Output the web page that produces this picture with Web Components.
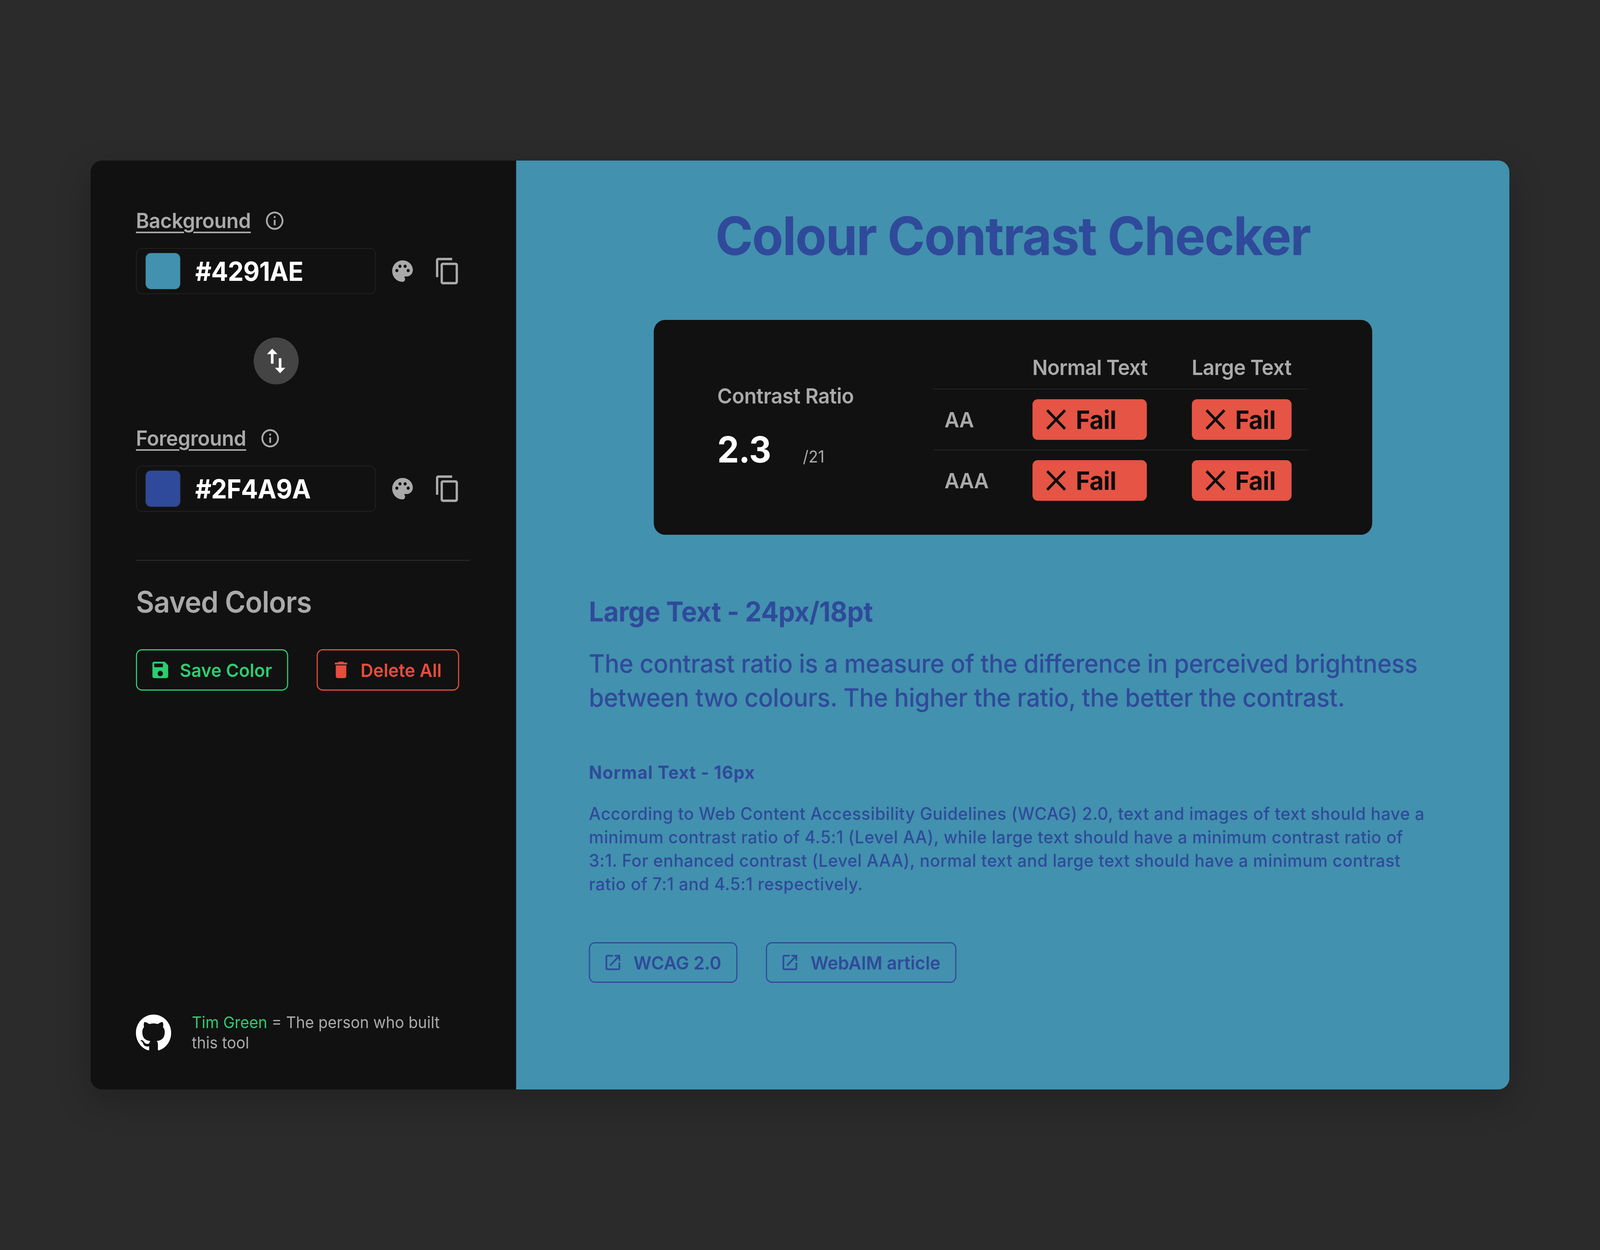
<!DOCTYPE html>
<html lang="en">
<head>
<meta charset="utf-8">
<title>Colour Contrast Checker</title>
<style>
  html, body { margin: 0; height: 100%; }
  body {
    background: #2b2b2b;
    display: flex;
    align-items: center;
    justify-content: center;
    overflow: hidden;
    font-family: Inter, "Liberation Sans", sans-serif;
  }
</style>
</head>
<body>
<contrast-app>
  <contrast-sidebar slot="side">
    <colour-field label="Background" value="#4291AE"></colour-field>
    <swap-button></swap-button>
    <colour-field label="Foreground" value="#2F4A9A"></colour-field>
  </contrast-sidebar>
  <contrast-main slot="main">
    <contrast-results></contrast-results>
  </contrast-main>
</contrast-app>

<script>
const ICONS = {
  info: 'M11 7h2v2h-2zm0 4h2v6h-2zm1-9C6.48 2 2 6.48 2 12s4.48 10 10 10 10-4.48 10-10S17.52 2 12 2zm0 18c-4.41 0-8-3.59-8-8s3.59-8 8-8 8 3.59 8 8-3.59 8-8 8z',
  palette: 'M12 2C6.49 2 2 6.49 2 12s4.49 10 10 10c1.38 0 2.5-1.12 2.5-2.5 0-.61-.23-1.2-.64-1.67-.08-.1-.13-.21-.13-.33 0-.28.22-.5.5-.5H16c3.31 0 6-2.69 6-6 0-4.96-4.49-9-10-9zm5.5 11c-.83 0-1.5-.67-1.5-1.5s.67-1.5 1.5-1.5 1.5.67 1.5 1.5-.67 1.5-1.5 1.5zm-3-4c-.83 0-1.5-.67-1.5-1.5S13.67 6 14.5 6s1.5.67 1.5 1.5S15.33 9 14.5 9zM5 11.5c0-.83.67-1.5 1.5-1.5s1.5.67 1.5 1.5S7.33 13 6.5 13 5 12.33 5 11.5zm6-4c0 .83-.67 1.5-1.5 1.5S8 8.33 8 7.5 8.67 6 9.5 6s1.5.67 1.5 1.5z',
  copy: 'M16 1H4c-1.1 0-2 .9-2 2v14h2V3h12V1zm3 4H8c-1.1 0-2 .9-2 2v14c0 1.1.9 2 2 2h11c1.1 0 2-.9 2-2V7c0-1.1-.9-2-2-2zm0 16H8V7h11v14z',
  swap: 'M16 17.01V10h-2v7.01h-3L15 21l4-3.99h-3zM9 3 5 6.99h3V14h2V6.99h3L9 3z',
  save: 'M17 3H5c-1.11 0-2 .9-2 2v14c0 1.1.89 2 2 2h14c1.1 0 2-.9 2-2V7l-4-4zm-5 16c-1.66 0-3-1.34-3-3s1.34-3 3-3 3 1.34 3 3-1.34 3-3 3zm3-10H5V5h10v4z',
  trash: 'M6 19c0 1.1.9 2 2 2h8c1.1 0 2-.9 2-2V7H6v12zM19 4h-3.5l-1-1h-5l-1 1H5v2h14V4z',
  close: 'M19.5 5.9 18.1 4.5 12 10.6 5.9 4.5 4.5 5.9 10.6 12 4.5 18.1 5.9 19.5 12 13.4 18.1 19.5 19.5 18.1 13.4 12z',
  external: 'M19 19H5V5h7V3H5a2 2 0 0 0-2 2v14a2 2 0 0 0 2 2h14c1.1 0 2-.9 2-2v-7h-2v7zM14 3v2h3.59l-9.83 9.83 1.41 1.41L19 6.41V10h2V3h-7z',
  github: 'M12 .297c-6.63 0-12 5.373-12 12 0 5.303 3.438 9.8 8.205 11.385.6.113.82-.258.82-.577 0-.285-.01-1.04-.015-2.04-3.338.724-4.042-1.61-4.042-1.61C4.422 18.07 3.633 17.7 3.633 17.7c-1.087-.744.084-.729.084-.729 1.205.084 1.838 1.236 1.838 1.236 1.07 1.835 2.809 1.305 3.495.998.108-.776.417-1.305.76-1.605-2.665-.3-5.466-1.332-5.466-5.93 0-1.31.465-2.38 1.235-3.22-.135-.303-.54-1.523.105-3.176 0 0 1.005-.322 3.3 1.23.96-.267 1.98-.399 3-.405 1.02.006 2.04.138 3 .405 2.28-1.552 3.285-1.23 3.285-1.23.645 1.653.24 2.873.12 3.176.765.84 1.23 1.91 1.23 3.22 0 4.61-2.805 5.625-5.475 5.92.42.36.81 1.096.81 2.22 0 1.606-.015 2.896-.015 3.286 0 .315.21.69.825.57C20.565 22.092 24 17.592 24 12.297c0-6.627-5.373-12-12-12'
};

function icon(name, size) {
  return `<svg width="${size}" height="${size}" viewBox="0 0 24 24" fill="currentColor" aria-hidden="true"><path d="${ICONS[name]}"/></svg>`;
}

class BaseElement extends HTMLElement {
  constructor() {
    super();
    this.attachShadow({ mode: 'open' });
  }
}

class ContrastApp extends BaseElement {
  connectedCallback() {
    // the design is 4267 wide; the window can come out narrower, so keep the horizontal proportions
    this.style.setProperty('--fit-x', innerWidth / 4267);
    this.shadowRoot.innerHTML = `
      <style>
        :host {
          display: flex;
          flex: none;
          width: 3784px;
          height: 2378px;
          border-radius: 30px;
          overflow: hidden;
          box-shadow: 0 30px 90px rgba(0,0,0,.22);
          transform: scaleX(var(--fit-x, 1));
        }
        ::slotted([slot=side]) { flex: 0 0 1135px; }
        ::slotted([slot=main]) { flex: 1; min-width: 0; }
      </style>
      <slot name="side"></slot>
      <slot name="main"></slot>`;
  }
}

class ColourField extends BaseElement {
  connectedCallback() {
    const value = this.getAttribute('value');
    this.shadowRoot.innerHTML = `
      <style>
        :host { display: block; }
        .label { display: flex; align-items: center; gap: 36px; height: 60px; margin-bottom: 40px; }
        .label span { font-size: 53.5px; font-weight: 600; line-height: 60px; color: #aaa; text-decoration: underline; text-decoration-thickness: 4px; text-underline-offset: 9px; letter-spacing: -.5px; }
        .label svg { color: #aaa; }
        .row { display: flex; align-items: center; color: #aaa; }
        .input { display: flex; align-items: center; box-sizing: border-box; width: 640px; height: 118px; padding: 0 24px; gap: 40px; border: 2px solid #222; border-radius: 16px; color: #fff; font-size: 67px; font-weight: 700; letter-spacing: -.9px; }
        .swatch { width: 92px; height: 92px; border-radius: 14px; background: ${value}; box-shadow: 0 0 0 2px #1c1c1c; }
        .palette { margin: 0 50px 0 38px; display: flex; }
        .copy { display: flex; }
      </style>
      <div class="label"><span>${this.getAttribute('label')}</span>${icon('info', 56)}</div>
      <div class="row">
        <div class="input"><div class="swatch"></div><div>${value}</div></div>
        <div class="palette">${icon('palette', 66)}</div>
        <div class="copy">${icon('copy', 74)}</div>
      </div>`;
  }
}

class SwapButton extends BaseElement {
  connectedCallback() {
    this.shadowRoot.innerHTML = `
      <style>
        :host { display: flex; align-items: center; justify-content: center; width: 120px; height: 120px; margin: 111px 0 108px 314px; border-radius: 50%; background: #444; color: #fff; }
      </style>
      ${icon('swap', 84)}`;
  }
}

class ActionButton extends BaseElement {
  connectedCallback() {
    this.shadowRoot.innerHTML = `
      <style>
        :host { display: inline-flex; align-items: center; box-sizing: border-box; height: 106px; padding: 0 40px 0 34px; gap: 24px; border: 3px solid currentColor; border-radius: 16px; font-size: 47px; font-weight: 600; white-space: nowrap; }
        svg { flex: none; }
      </style>
      ${icon(this.getAttribute('icon'), 56)}<slot></slot>`;
  }
}

class ContrastSidebar extends BaseElement {
  connectedCallback() {
    this.shadowRoot.innerHTML = `
      <style>
        :host { display: flex; flex-direction: column; box-sizing: border-box; padding: 124px 123px 94px 121px; background: #111; color: #aaa; }
        hr { width: 100%; height: 3px; margin: 123px 0 0; border: 0; background: #262626; }
        h2 { margin: 67px 0 83px; font-size: 75px; line-height: 76px; font-weight: 600; letter-spacing: -1px; }
        .actions { display: flex; gap: 76px; }
        .save { color: #2ecc71; }
        .delete { color: #e74c3c; padding-right: 44px; }
        footer { display: flex; align-items: center; gap: 55px; margin-top: auto; font-size: 41px; line-height: 52px; }
        footer svg { flex: none; color: #fff; }
        footer a { color: #2ecc71; }
      </style>
      <slot></slot>
      <hr>
      <h2>Saved Colors</h2>
      <div class="actions">
        <action-button class="save" icon="save">Save Color</action-button>
        <action-button class="delete" icon="trash">Delete All</action-button>
      </div>
      <footer>
        ${icon('github', 94)}
        <div><a>Tim Green</a> <span>= The person who built</span><br><span>this tool</span></div>
      </footer>`;
  }
}

class FailBadge extends BaseElement {
  connectedCallback() {
    this.shadowRoot.innerHTML = `
      <style>
        :host { display: flex; align-items: center; box-sizing: border-box; width: 100%; height: 104px; padding-left: 21px; gap: 11px; border-radius: 14px; background: #e55444; color: #0c0c0c; font-size: 65px; font-weight: 700; letter-spacing: -.5px; }
      </style>
      ${icon('close', 84)}<span>Fail</span>`;
  }
}

class ContrastResults extends BaseElement {
  connectedCallback() {
    this.shadowRoot.innerHTML = `
      <style>
        :host { display: flex; align-items: center; box-sizing: border-box; width: 1916px; height: 550px; margin: 0 auto; padding: 0 0 0 170px; border-radius: 30px; background: #111; color: #aaa; font-weight: 600; font-size: 54px; letter-spacing: -.8px; white-space: nowrap; }
        .ratio { flex: 0 0 575px; padding-top: 18px; }
        .ratio .name { line-height: 64px; margin-bottom: 50px; letter-spacing: -.5px; }
        .value { display: flex; align-items: baseline; gap: 85px; color: #fff; font-size: 92px; line-height: 110px; font-weight: 700; letter-spacing: -1px; }
        .value small { color: #aaa; font-size: 42px; font-weight: 400; letter-spacing: 0; }
        .table { display: grid; grid-template-columns: 114px 305px 266px; column-gap: 120px; width: 1000px; box-sizing: border-box; padding: 4px 44px 0 31px; }
        .table > div { display: flex; align-items: center; }
        .head { height: 110px; }
        .cell { height: 154px; }
        .rule { grid-column: 1 / -1; height: 2px; margin-left: -31px; width: 1000px; background: #262626; }
      </style>
      <div class="ratio">
        <div class="name">Contrast Ratio</div>
        <div class="value"><span>2.3</span><small>/21</small></div>
      </div>
      <div class="table">
        <div class="head"></div><div class="head">Normal Text</div><div class="head">Large Text</div>
        <div class="rule"></div>
        <div class="cell">AA</div>
        <div class="cell"><fail-badge></fail-badge></div>
        <div class="cell"><fail-badge></fail-badge></div>
        <div class="rule"></div>
        <div class="cell">AAA</div>
        <div class="cell"><fail-badge></fail-badge></div>
        <div class="cell"><fail-badge></fail-badge></div>
      </div>`;
  }
}

class LinkButton extends BaseElement {
  connectedCallback() {
    this.shadowRoot.innerHTML = `
      <style>
        :host { display: inline-flex; align-items: center; box-sizing: border-box; height: 104px; padding: 0 40px 0 35px; gap: 29px; border: 3px solid #2f4a9a; border-radius: 16px; color: #2f4a9a; font-size: 47px; font-weight: 600; white-space: nowrap; }
      </style>
      ${icon('external', 52)}<slot></slot>`;
  }
}

class ContrastMain extends BaseElement {
  connectedCallback() {
    this.shadowRoot.innerHTML = `
      <style>
        :host { display: block; box-sizing: border-box; padding: 113px 194px 0; background: #4291ae; color: #2f4a9a; }
        h1 { margin: 0 0 135px; text-align: center; font-size: 136px; line-height: 160px; font-weight: 700; letter-spacing: -2.5px; }
        h2 { margin: 147px 0 0; font-size: 70px; line-height: 100px; font-weight: 700; letter-spacing: -.6px; }
        p { max-width: 2245px; }
        .large { margin: 39px 0 0; font-size: 65px; line-height: 87px; font-weight: 450; letter-spacing: -.42px; }
        h3 { margin: 113px 0 0; font-size: 46px; line-height: 70px; font-weight: 700; letter-spacing: 1.3px; }
        .normal { margin: 41px 0 0; font-size: 44.5px; line-height: 60px; font-weight: 450; letter-spacing: .7px; }
        .links { display: flex; gap: 76px; margin-top: 119px; }
      </style>
      <h1>Colour Contrast Checker</h1>
      <slot></slot>
      <h2>Large Text - 24px/18pt</h2>
      <p class="large">The contrast ratio is a measure of the difference in perceived brightness between two colours. The higher the ratio, the better the contrast.</p>
      <h3>Normal Text - 16px</h3>
      <p class="normal">According to Web Content Accessibility Guidelines (WCAG) 2.0, text and images of text should have a minimum contrast ratio of 4.5:1 (Level AA), while large text should have a minimum contrast ratio of 3:1. For enhanced contrast (Level AAA), normal text and large text should have a minimum contrast ratio of 7:1 and 4.5:1 respectively.</p>
      <div class="links">
        <link-button>WCAG 2.0</link-button>
        <link-button>WebAIM article</link-button>
      </div>`;
  }
}

customElements.define('contrast-app', ContrastApp);
customElements.define('colour-field', ColourField);
customElements.define('swap-button', SwapButton);
customElements.define('action-button', ActionButton);
customElements.define('contrast-sidebar', ContrastSidebar);
customElements.define('fail-badge', FailBadge);
customElements.define('contrast-results', ContrastResults);
customElements.define('link-button', LinkButton);
customElements.define('contrast-main', ContrastMain);
</script>
</body>
</html>
